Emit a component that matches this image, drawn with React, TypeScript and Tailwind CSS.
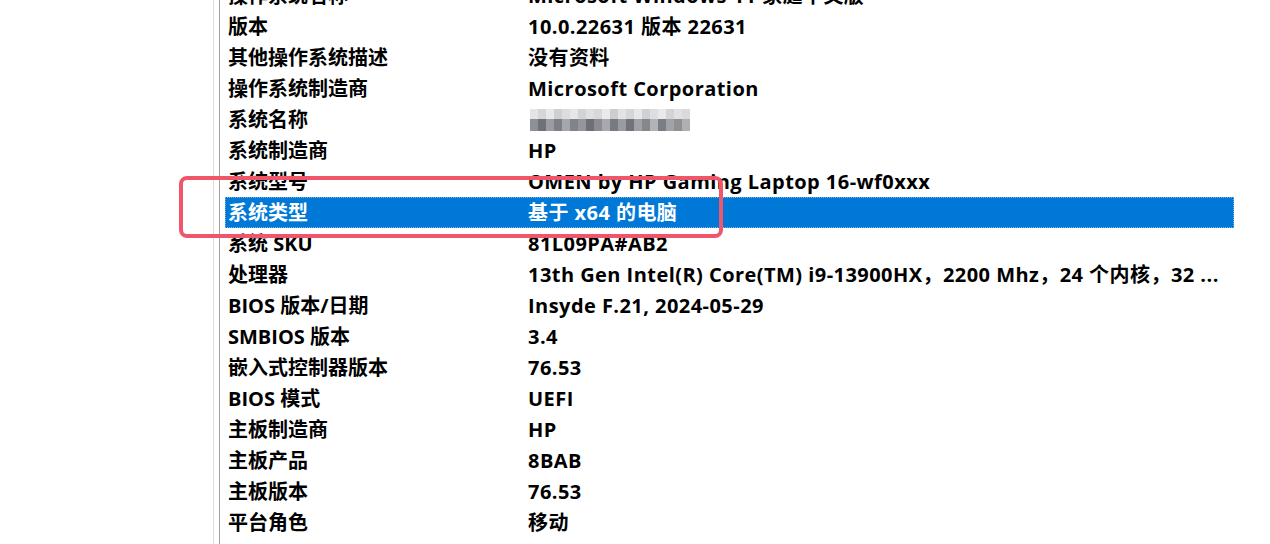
import React from 'react';

const rows: [string, string][] = [
  ['操作系统名称', 'Microsoft Windows 11 家庭中文版'],
  ['版本', '10.0.22631 版本 22631'],
  ['其他操作系统描述', '没有资料'],
  ['操作系统制造商', 'Microsoft Corporation'],
  ['系统名称', '__BLUR__'],
  ['系统制造商', 'HP'],
  ['系统型号', 'OMEN by HP Gaming Laptop 16-wf0xxx'],
  ['系统类型', '基于 x64 的电脑'],
  ['系统 SKU', '81L09PA#AB2'],
  ['处理器', '13th Gen Intel(R) Core(TM) i9-13900HX，2200 Mhz，24 个内核，32 ...'],
  ['BIOS 版本/日期', 'Insyde F.21, 2024-05-29'],
  ['SMBIOS 版本', '3.4'],
  ['嵌入式控制器版本', '76.53'],
  ['BIOS 模式', 'UEFI'],
  ['主板制造商', 'HP'],
  ['主板产品', '8BAB'],
  ['主板版本', '76.53'],
  ['平台角色', '移动'],
];

// mosaic colours for the blurred computer name
const blurTop = ['#e4e4e6', '#d6d6d8', '#e8e8ea', '#cfd0d3', '#dcdcde', '#e6e6e8', '#d2d3d6', '#e0e0e2', '#d8d8da', '#eaeaec', '#cdcdd0', '#e2e2e4', '#d5d6d9', '#e7e7e9', '#d0d1d4', '#dedee0', '#e9e9eb', '#d3d3d6', '#e1e1e3', '#dadadc'];
const blurBot = ['#8d9096', '#6f7379', '#9a9ca1', '#7c7f85', '#a6a7ab', '#808389', '#94969b', '#6c6f75', '#8a8c92', '#a9a9ad', '#777a80', '#999b9f', '#707379', '#9fa1a5', '#84878c', '#b3b3b6', '#7a7d83', '#a0a2a6', '#8e9095', '#b0b0b3'];

const Blur = () => (
  <div className="flex flex-col mt-[1px] ml-[2px]">
    <div className="flex">
      {blurTop.map((c, i) => (
        <div key={i} className="w-[8px] h-[10px]" style={{ background: c }} />
      ))}
    </div>
    <div className="flex">
      {blurBot.map((c, i) => (
        <div key={i} className="w-[8px] h-[12px]" style={{ background: c }} />
      ))}
    </div>
  </div>
);

export default function App() {
  return (
    <div
      className="relative w-[1270px] h-[544px] overflow-hidden bg-white text-black"
      style={{ fontFamily: '"Open Sans", "Noto Sans CJK SC", sans-serif' }}
    >
      <div className="flex h-full">
        <div className="w-[213px] shrink-0" />
        <div className="w-[1px] bg-[#dcdcdc] shrink-0" />
        <div className="w-[5px] shrink-0" />
        <div className="w-[1px] bg-[#a0a0a0] shrink-0" />
        <div className="w-[5px] shrink-0" />
        <div className="w-[1009px] mt-[-20px] flex flex-col">
          {rows.map(([k, v], i) => {
            const sel = i === 7;
            return (
              <div
                key={i}
                className={
                  'flex items-center h-[31px] text-[20px] font-bold whitespace-nowrap ' +
                  (sel ? 'bg-[#0078d7] text-white border border-dotted border-[#7fb3de]' : 'border border-transparent')
                }
              >
                <div className="w-[302px] pl-[2px] shrink-0">{k}</div>
                <div className="flex-1 tracking-[0.45px]">{v === '__BLUR__' ? <Blur /> : v}</div>
              </div>
            );
          })}
        </div>
      </div>
      <div className="absolute left-[179px] top-[176px] w-[544px] h-[62px] border-[4px] border-[#f0566a] rounded-[8px]" />
    </div>
  );
}
